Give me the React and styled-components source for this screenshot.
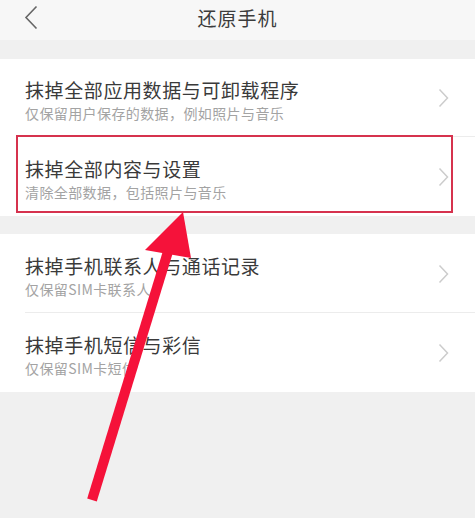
import React from "react";
import styled, { createGlobalStyle } from "styled-components";

const Global = createGlobalStyle`
  html, body { margin: 0; padding: 0; background: #f0f0f0; }
  body { font-family: "Noto Sans CJK SC", "Noto Sans", sans-serif; }
`;

const Page = styled.div`
  position: relative;
  width: 475px;
  height: 518px;
  background: #f0f0f0;
  overflow: hidden;
`;

const Header = styled.div`
  height: 40px;
  background: #f7f7f7;
  display: flex;
  align-items: center;
  justify-content: center;
  position: relative;
`;

const BackBtn = styled.div`
  position: absolute;
  left: 22px;
  top: 4px;
  width: 18px;
  height: 26px;
  display: flex;
  align-items: center;
  justify-content: center;
`;

const Title = styled.div`
  font-size: 19px;
  color: #3c3c3c;
  letter-spacing: 1px;
  margin-top: -6px;
`;

const Group = styled.div`
  background: #ffffff;
  margin-top: ${(p) => p.$gap}px;
`;

const Row = styled.div`
  height: ${(p) => p.$h}px;
  display: flex;
  align-items: center;
  padding: 0 26px 0 25px;
  box-sizing: border-box;
  position: relative;
  &::after {
    content: "";
    display: ${(p) => (p.$last ? "none" : "block")};
    position: absolute;
    left: 25px;
    right: 0;
    bottom: 0;
    height: 1px;
    background: #ececec;
  }
`;

const TextCol = styled.div`
  flex: 1;
  display: flex;
  flex-direction: column;
  gap: 1px;
  margin-top: 5px;
`;

const ItemTitle = styled.div`
  font-size: 19px;
  line-height: 24px;
  color: #3a3a3a;
  letter-spacing: 0.6px;
`;

const ItemSub = styled.div`
  font-size: 14px;
  line-height: 20px;
  color: #a3a3a3;
  letter-spacing: 0.4px;
`;

const Highlight = styled.div`
  position: absolute;
  left: 16px;
  top: 135px;
  width: 437px;
  height: 78px;
  border: 2px solid #d6324e;
  box-sizing: border-box;
  pointer-events: none;
`;

const ArrowLayer = styled.svg`
  position: absolute;
  left: 0;
  top: 0;
  pointer-events: none;
`;

const Chevron = () => (
  <svg width="11" height="20" viewBox="0 0 11 20">
    <polyline points="1.5,1.5 9.5,10 1.5,18.5" fill="none" stroke="#cccccc" strokeWidth="1.5" />
  </svg>
);

const items = [
  [
    { t: "抹掉全部应用数据与可卸载程序", s: "仅保留用户保存的数据，例如照片与音乐", h: 78 },
    { t: "抹掉全部内容与设置", s: "清除全部数据，包括照片与音乐", h: 79 },
  ],
  [
    { t: "抹掉手机联系人与通话记录", s: "仅保留SIM卡联系人", h: 79 },
    { t: "抹掉手机短信与彩信", s: "仅保留SIM卡短信", h: 79 },
  ],
];

export default function App() {
  return (
    <>
      <Global />
      <Page>
        <Header>
          <BackBtn>
            <svg width="14" height="25" viewBox="0 0 14 25">
              <polyline points="12.5,1.5 2,12.5 12.5,23.5" fill="none" stroke="#666" strokeWidth="1.6" />
            </svg>
          </BackBtn>
          <Title>还原手机</Title>
        </Header>
        {items.map((group, gi) => (
          <Group key={gi} $gap={gi === 0 ? 19 : 18}>
            {group.map((it, i) => (
              <Row key={i} $h={it.h} $last={i === group.length - 1}>
                <TextCol>
                  <ItemTitle>{it.t}</ItemTitle>
                  <ItemSub>{it.s}</ItemSub>
                </TextCol>
                <Chevron />
              </Row>
            ))}
          </Group>
        ))}
        <Highlight />
        <ArrowLayer width="475" height="518" viewBox="0 0 475 518">
          <line x1="92" y1="500" x2="170" y2="245" stroke="#f5123a" strokeWidth="10" />
          <polygon points="183,212 145,250 191,258" fill="#f5123a" />
        </ArrowLayer>
      </Page>
    </>
  );
}
